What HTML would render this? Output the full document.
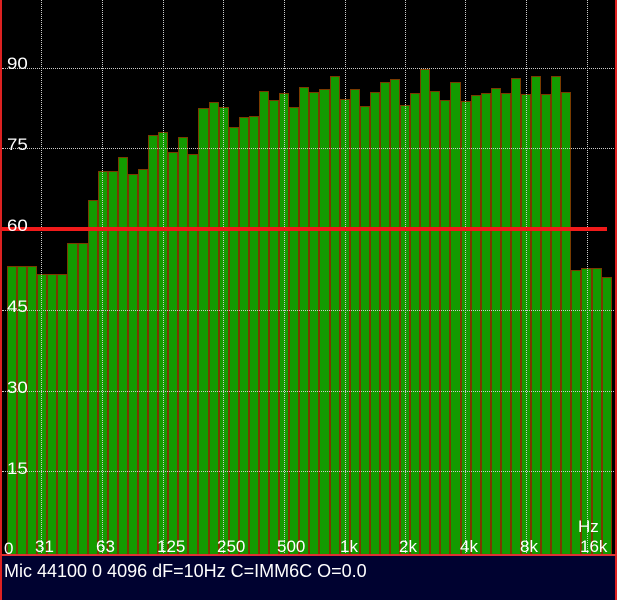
<!DOCTYPE html>
<html><head><style>
html,body{margin:0;padding:0;background:#000;width:617px;height:600px;overflow:hidden;font-family:"Liberation Sans",sans-serif}
#plot{position:absolute;left:0;top:0;width:617px;height:555px;background:#000;border-left:2px solid #d22;border-right:2px solid #d22;box-sizing:border-box}
#bars{position:absolute;left:5px;width:605px;top:0;height:555px;display:flex;align-items:flex-end}
#bars div{flex:1;background:#139b00;box-shadow:inset 1px 0 0 #7a3a00,inset -1px 0 0 #7a3a00,inset 0 1px 0 #7a3a00}
.h{position:absolute;left:0;width:612px;height:0;border-top:1px dotted #ccc}
.v{position:absolute;top:0;height:555px;width:0;border-left:1px dotted #ccc}
.yl{position:absolute;left:5px;color:#fff;font-size:17px;transform:scaleX(1.1);transform-origin:left}
.xl{position:absolute;top:537px;color:#fff;font-size:17px}
#red{position:absolute;left:0;width:605px;top:227px;height:4px;background:#f01a1a}
#panel{position:absolute;left:0;top:554px;width:617px;height:46px;background:#000230;border-top:2px solid #d33;border-left:2px solid #d22;border-right:2px solid #d22;box-sizing:border-box;color:#fff;font-size:18px;padding:5px 0 0 2px}
</style></head><body>
<div id="plot">
<div id="bars">
<div style="height:289px"></div><div style="height:289px"></div><div style="height:289px"></div><div style="height:281px"></div><div style="height:281px"></div><div style="height:281px"></div><div style="height:312px"></div><div style="height:312px"></div><div style="height:355px"></div><div style="height:384px"></div>
<div style="height:384px"></div><div style="height:398px"></div><div style="height:381px"></div><div style="height:386px"></div><div style="height:420px"></div><div style="height:423px"></div><div style="height:403px"></div><div style="height:418px"></div><div style="height:401px"></div><div style="height:447px"></div>
<div style="height:453px"></div><div style="height:448px"></div><div style="height:428px"></div><div style="height:438px"></div><div style="height:439px"></div><div style="height:464px"></div><div style="height:455px"></div><div style="height:462px"></div><div style="height:448px"></div><div style="height:468px"></div>
<div style="height:463px"></div><div style="height:466px"></div><div style="height:479px"></div><div style="height:456px"></div><div style="height:466px"></div><div style="height:449px"></div><div style="height:463px"></div><div style="height:473px"></div><div style="height:476px"></div><div style="height:450px"></div>
<div style="height:462px"></div><div style="height:486px"></div><div style="height:464px"></div><div style="height:455px"></div><div style="height:473px"></div><div style="height:454px"></div><div style="height:460px"></div><div style="height:462px"></div><div style="height:467px"></div><div style="height:462px"></div>
<div style="height:477px"></div><div style="height:461px"></div><div style="height:479px"></div><div style="height:461px"></div><div style="height:479px"></div><div style="height:463px"></div><div style="height:285px"></div><div style="height:287px"></div><div style="height:287px"></div><div style="height:278px"></div>
</div>
<div class="h" style="top:68px"></div><div class="h" style="top:148px"></div><div class="h" style="top:310px"></div><div class="h" style="top:391px"></div><div class="h" style="top:471px"></div>
<div class="v" style="left:39px"></div><div class="v" style="left:100px"></div><div class="v" style="left:161px"></div><div class="v" style="left:221px"></div><div class="v" style="left:282px"></div><div class="v" style="left:343px"></div><div class="v" style="left:403px"></div><div class="v" style="left:463px"></div><div class="v" style="left:524px"></div><div class="v" style="left:585px"></div>
<div id="red"></div>
<div class="yl" style="top:54px">90</div><div class="yl" style="top:135px">75</div><div class="yl" style="top:216px">60</div><div class="yl" style="top:297px">45</div><div class="yl" style="top:378px">30</div><div class="yl" style="top:459px">15</div>
<div class="xl" style="left:2px;top:539px">0</div>
<div class="xl" style="left:33px">31</div><div class="xl" style="left:94px">63</div><div class="xl" style="left:155px">125</div><div class="xl" style="left:215px">250</div><div class="xl" style="left:275px">500</div><div class="xl" style="left:338px">1k</div><div class="xl" style="left:397px">2k</div><div class="xl" style="left:458px">4k</div><div class="xl" style="left:518px">8k</div><div class="xl" style="left:578px">16k</div>
<div class="xl" style="left:576px;top:517px">Hz</div>
</div>
<div id="panel">Mic 44100 0 4096 dF=10Hz C=IMM6C O=0.0</div>
</body></html>
